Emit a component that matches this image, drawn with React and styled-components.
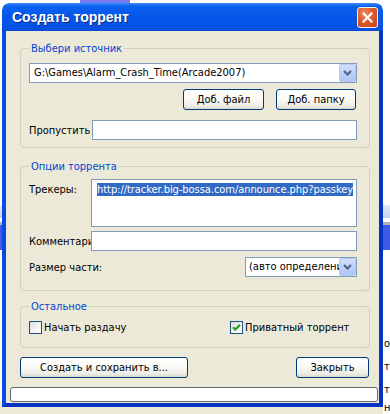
import React from "react";
import styled, { createGlobalStyle } from "styled-components";

const UI = `"DejaVu Sans Condensed", "DejaVu Sans", sans-serif`;

const Global = createGlobalStyle`
  html, body { margin: 0; padding: 0; background: #fff; }
  body { width: 390px; height: 414px; overflow: hidden; font-family: ${UI}; }
`;

const Desktop = styled.div`
  position: relative;
  width: 390px;
  height: 414px;
  overflow: hidden;
  background: #fff;
`;

/* ---------- application behind the dialog ---------- */
const Backdrop = styled.div`
  display: flex;
  flex-direction: column;
  width: 390px;
  height: 414px;
`;
const Band = styled.div`
  flex: none;
  height: ${(p) => p.$h}px;
  background: ${(p) => p.$bg || "#fff"};
  display: flex;
`;
const Chip = styled.div`
  margin-left: 80px;
  width: 50px;
  background: #7a78ee;
`;
const BackRow = styled.div`
  flex: none;
  height: ${(p) => p.$h || 23}px;
  padding-left: 384px;
  font: 11px ${UI};
  line-height: ${(p) => p.$h || 23}px;
  white-space: nowrap;
  overflow: hidden;
  color: #000;
  background: ${(p) => p.$bg || "#fff"};
`;

/* ---------- window ---------- */
const Window = styled.div`
  position: absolute;
  left: 2px;
  top: 3px;
  width: 381px;
  height: 404px;
  display: flex;
  flex-direction: column;
  overflow: hidden;
  border-radius: 7px 7px 0 0;
`;
const TitleBar = styled.div`
  flex: none;
  height: 28px;
  display: flex;
  align-items: center;
  justify-content: space-between;
  padding: 0 5px 0 10px;
  border-radius: 7px 7px 0 0;
  background: linear-gradient(
    180deg,
    #3d8dfb 0%,
    #0b62f0 12%,
    #0657e8 45%,
    #0354e6 80%,
    #0a4bd8 100%
  );
`;
const Title = styled.div`
  font: bold 14px "Liberation Sans", Arial, sans-serif;
  color: #fff;
  text-shadow: 1px 1px 0 #0a2a8e;
`;
const CloseButton = styled.div`
  width: 21px;
  height: 21px;
  box-sizing: border-box;
  border: 1px solid #f4f4f4;
  border-radius: 3px;
  background: radial-gradient(circle at 35% 30%, #f08a62 0%, #e05a2e 45%, #c4401c 100%);
  display: flex;
  align-items: center;
  justify-content: center;
`;
const Frame = styled.div`
  flex: 1;
  min-height: 0;
  display: flex;
  border: 4px solid #0842d6;
  border-top: 0;
  border-left-color: #0a4ae0;
  border-right-color: #0733c4;
  border-bottom-color: #0733c4;
`;
const Client = styled.div`
  flex: 1;
  min-width: 0;
  display: flex;
  flex-direction: column;
  padding: 11px 1px 1px 4px;
  background: #ece9d8;
  font: 11px ${UI};
  color: #000;
`;

/* ---------- group boxes ---------- */
const Group = styled.fieldset`
  margin: ${(p) => p.$top || 0}px 8px 0 10px;
  padding: 0 12px ${(p) => p.$pb}px 8px;
  border: 1px solid #d0d0bf;
  border-radius: 4px;
  display: flex;
  flex-direction: column;
  min-width: 0;
`;
const Legend = styled.legend`
  padding: 0 2px;
  margin: 0;
  font: 11px ${UI};
  line-height: 13px;
  color: #0046d5;
`;

/* ---------- fields ---------- */
const Combo = styled.div`
  display: flex;
  align-items: stretch;
  box-sizing: border-box;
  height: 20px;
  min-width: 0;
  width: ${(p) => (p.$w ? `${p.$w}px` : "auto")};
  flex: none;
  margin-top: ${(p) => p.$mt || 0}px;
  border: 1px solid #7f9db9;
  background: #fff;
  padding: 0 0 0 ${(p) => p.$pl || 4}px;
`;
const ComboText = styled.div`
  flex: 1;
  min-width: 0;
  overflow: hidden;
  white-space: nowrap;
  line-height: 18px;
`;
const DropButton = styled.div`
  flex: none;
  width: 17px;
  box-sizing: border-box;
  border: 1px solid #b6c9f3;
  border-radius: 2px;
  background: linear-gradient(180deg, #d3e0fb 0%, #bcd0f7 50%, #afc5f3 100%);
  display: flex;
  align-items: center;
  justify-content: center;
`;
const ButtonRow = styled.div`
  display: flex;
  justify-content: flex-end;
  gap: 12px;
  margin-top: 6px;
  padding-right: 1px;
`;
const Button = styled.div`
  box-sizing: border-box;
  width: ${(p) => p.$w}px;
  height: 21px;
  border: 1px solid #003c74;
  border-radius: 3px;
  background: linear-gradient(180deg, #ffffff 0%, #fafaf7 45%, #efeee7 80%, #dcdad0 100%);
  display: flex;
  align-items: center;
  justify-content: center;
  font: 11px ${UI};
  line-height: 19px;
  color: #000;
`;
const FieldRow = styled.div`
  display: flex;
  min-width: 0;
  align-items: ${(p) => (p.$top ? "flex-start" : "center")};
  margin-top: ${(p) => p.$mt || 0}px;
`;
const Label = styled.div`
  flex: none;
  width: ${(p) => p.$w || 62}px;
  padding-top: ${(p) => p.$pt || 0}px;
  white-space: nowrap;
  overflow: hidden;
  line-height: 13px;
`;
const TextInput = styled.div`
  flex: 1;
  min-width: 0;
  box-sizing: border-box;
  height: ${(p) => p.$h || 20}px;
  border: 1px solid #7f9db9;
  background: #fff;
  padding: 3px 5px;
  overflow: hidden;
  white-space: nowrap;
`;
const Selected = styled.span`
  background: #316ac5;
  color: #fff;
  line-height: 13px;
  letter-spacing: -0.05px;
`;
const Spacer = styled.div`
  flex: 1;
`;

/* ---------- checkboxes ---------- */
const CheckRow = styled.div`
  display: grid;
  grid-template-columns: 201px auto;
  margin-top: 8px;
`;
const Check = styled.div`
  display: flex;
  align-items: center;
  gap: 2px;
  line-height: 13px;
  white-space: nowrap;
`;
const CheckBox = styled.div`
  flex: none;
  width: 13px;
  height: 13px;
  box-sizing: border-box;
  border: 1px solid #1c5180;
  background: linear-gradient(135deg, #dcdcd7 0%, #f4f4f1 60%, #ffffff 100%);
  display: flex;
  align-items: center;
  justify-content: center;
`;

/* ---------- bottom ---------- */
const ActionRow = styled.div`
  display: flex;
  justify-content: space-between;
  margin: 9px 9px 0 10px;
`;
const Progress = styled.div`
  height: 15px;
  margin-top: 9px;
  box-sizing: border-box;
  border: 1px solid #686868;
  border-radius: 3px;
  background: #fff;
`;

const Chevron = () => (
  <svg width="9" height="6" viewBox="0 0 9 6">
    <path d="M1 1 L4.5 4.5 L8 1" fill="none" stroke="#4d6185" strokeWidth="2" />
  </svg>
);

const CloseX = () => (
  <svg width="11" height="11" viewBox="0 0 11 11">
    <path d="M1.5 1.5 L9.5 9.5 M9.5 1.5 L1.5 9.5" stroke="#fff" strokeWidth="2.2" strokeLinecap="square" />
  </svg>
);

const Tick = () => (
  <svg width="9" height="9" viewBox="0 0 9 9">
    <path d="M1 4.2 L3.4 6.6 L8 1.8" fill="none" stroke="#21a121" strokeWidth="2.1" />
  </svg>
);

export default function App() {
  return (
    <>
      <Global />
      <Desktop>
        <Backdrop>
          <Band $h={3}>
            <Chip />
          </Band>
          <Band $h={202} />
          <Band $h={13} $bg="linear-gradient(180deg,#e3ebf9,#c4d4f1)" />
          <Band $h={4} />
          <Band $h={3} $bg="#b4b4b4" />
          <Band $h={25} $bg="#3d5be4" />
          <Band $h={82} />
          <BackRow>о</BackRow>
          <BackRow>т</BackRow>
          <BackRow>т</BackRow>
          <BackRow $h={13} $bg="linear-gradient(90deg,#ece9d8 383px,#fff 383px)">не</BackRow>
        </Backdrop>

        <Window>
          <TitleBar>
            <Title>Создать торрент</Title>
            <CloseButton>
              <CloseX />
            </CloseButton>
          </TitleBar>
          <Frame>
            <Client>
              <Group $pb={7}>
                <Legend>Выбери источник</Legend>
                <Combo $mt={8}>
                  <ComboText>G:\Games\Alarm_Crash_Time(Arcade2007)</ComboText>
                  <DropButton>
                    <Chevron />
                  </DropButton>
                </Combo>
                <ButtonRow>
                  <Button $w={81}>Доб. файл</Button>
                  <Button $w={80}>Доб. папку</Button>
                </ButtonRow>
                <FieldRow $mt={10}>
                  <Label $w={63}>Пропустить</Label>
                  <TextInput />
                </FieldRow>
              </Group>

              <Group $top={12} $pb={13}>
                <Legend>Опции торрента</Legend>
                <FieldRow $top $mt={6}>
                  <Label $pt={4}>Трекеры:</Label>
                  <TextInput $h={48}>
                    <Selected>http://tracker.big-bossa.com/announce.php?passkey</Selected>
                  </TextInput>
                </FieldRow>
                <FieldRow $mt={4}>
                  <Label>Комментарий</Label>
                  <TextInput />
                </FieldRow>
                <FieldRow $mt={6}>
                  <Label $w={120}>Размер части:</Label>
                  <Spacer />
                  <Combo $w={112} $pl={3}>
                    <ComboText>(авто определение)</ComboText>
                    <DropButton>
                      <Chevron />
                    </DropButton>
                  </Combo>
                </FieldRow>
              </Group>

              <Group $top={9} $pb={13}>
                <Legend>Остальное</Legend>
                <CheckRow>
                  <Check>
                    <CheckBox />
                    Начать раздачу
                  </Check>
                  <Check>
                    <CheckBox>
                      <Tick />
                    </CheckBox>
                    Приватный торрент
                  </Check>
                </CheckRow>
              </Group>

              <ActionRow>
                <Button $w={168}>Создать и сохранить в...</Button>
                <Button $w={73}>Закрыть</Button>
              </ActionRow>
              <Progress />
            </Client>
          </Frame>
        </Window>
      </Desktop>
    </>
  );
}
